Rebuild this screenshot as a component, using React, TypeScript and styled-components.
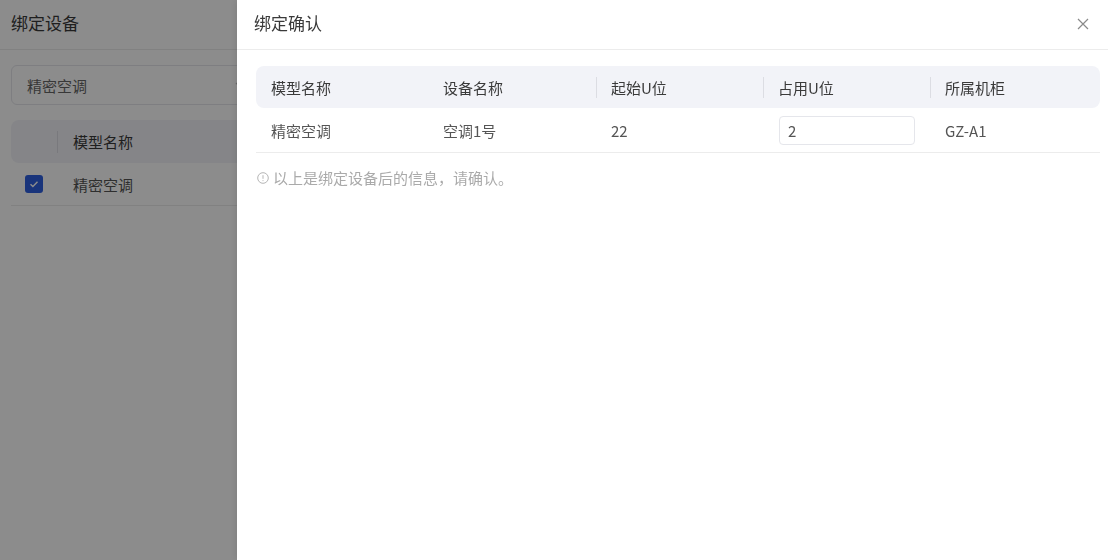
import styled, { createGlobalStyle } from 'styled-components';

const GlobalStyle = createGlobalStyle`
  html, body {
    margin: 0;
    padding: 0;
  }
  body {
    font-family: "Noto Sans CJK SC", "Noto Sans", sans-serif;
    background: #fff;
    color: #333;
    overflow: hidden;
  }
  * {
    box-sizing: border-box;
  }
`;

/* ---------- page behind the drawer ---------- */

const Page = styled.div`
  width: 100vw;
  height: 100vh;
  background: #fff;
`;

const PageHeader = styled.div`
  height: 50px;
  display: flex;
  align-items: center;
  padding: 0 11px 4px;
  border-bottom: 1px solid #ececec;
  font-size: 17px;
  color: #3a3a3a;
`;

const PageBody = styled.div`
  padding: 15px 11px 0;
`;

const Select = styled.div`
  width: 250px;
  height: 40px;
  display: flex;
  align-items: center;
  justify-content: space-between;
  padding: 0 14px 0 15px;
  border: 1px solid #e5e6eb;
  border-radius: 6px;
  font-size: 15px;
  color: #666;
`;

const ListTable = styled.div`
  margin-top: 15px;
  width: 620px;
`;

const ListRow = styled.div<{ $head?: boolean }>`
  display: grid;
  grid-template-columns: 47px 1fr;
  align-items: center;
  height: 43px;
  font-size: 15px;
  color: ${(p) => (p.$head ? '#3a3a3a' : '#555')};
  background: ${(p) => (p.$head ? '#f2f3f8' : 'transparent')};
  border-radius: ${(p) => (p.$head ? '8px' : '0')};
  border-bottom: ${(p) => (p.$head ? 'none' : '1px solid #ececec')};
`;

const CheckCell = styled.div<{ $divider?: boolean }>`
  height: 22px;
  display: flex;
  align-items: center;
  justify-content: center;
  border-right: ${(p) => (p.$divider ? '1px solid #dcdde3' : '1px solid transparent')};
`;

const Checkbox = styled.span`
  width: 18px;
  height: 18px;
  border-radius: 3px;
  background: #2f5fe0;
  display: inline-flex;
  align-items: center;
  justify-content: center;
`;

const ListCell = styled.div`
  padding-left: 15px;
`;

/* ---------- drawer ---------- */

const Mask = styled.div`
  position: fixed;
  inset: 0;
  background: rgba(0, 0, 0, 0.45);
`;

const Drawer = styled.aside`
  position: fixed;
  top: 0;
  right: 0;
  bottom: 0;
  width: 871px;
  background: #fff;
  display: flex;
  flex-direction: column;
  box-shadow: -2px 0 6px rgba(0, 0, 0, 0.08);
`;

const DrawerHeader = styled.div`
  height: 50px;
  flex-shrink: 0;
  display: flex;
  align-items: center;
  justify-content: space-between;
  padding: 0 19px 0 16px;
  border-bottom: 1px solid #ececec;
`;

const DrawerTitle = styled.h2`
  margin: -5px 0 0 1px;
  font-size: 17px;
  font-weight: 400;
  color: #3a3a3a;
`;

const CloseButton = styled.button`
  width: 12px;
  height: 12px;
  padding: 0;
  border: none;
  background: none;
  display: flex;
  cursor: pointer;
  margin-top: -2px;
`;

const DrawerBody = styled.div`
  padding: 16px 8px 0 19px;
`;

const COLUMNS = '172px 168px 167px 167px 1fr';

const TableHead = styled.div`
  display: grid;
  grid-template-columns: ${COLUMNS};
  align-items: center;
  height: 42px;
  background: #f2f3f8;
  border-radius: 8px;
  font-size: 15px;
  color: #3a3a3a;
`;

const TableRow = styled.div`
  display: grid;
  grid-template-columns: ${COLUMNS};
  align-items: center;
  height: 45px;
  border-bottom: 1px solid #ececec;
  font-size: 15px;
  color: #555;
`;

const HeadCell = styled.div<{ $divider?: boolean }>`
  position: relative;
  padding-left: 15px;

  &::before {
    content: '';
    display: ${(p) => (p.$divider ? 'block' : 'none')};
    position: absolute;
    left: 0;
    top: 50%;
    width: 1px;
    height: 21px;
    margin-top: -10px;
    background: #dcdde3;
  }
`;

const Cell = styled.div`
  padding-left: 15px;
`;

const NumberInput = styled.input`
  width: 136px;
  height: 29px;
  margin-left: 1px;
  padding: 0 8px;
  border: 1px solid #e5e6eb;
  border-radius: 4px;
  font: inherit;
  font-size: 15px;
  color: #555;
  outline: none;
`;

const Note = styled.p`
  margin: 14px 0 0 1px;
  display: flex;
  align-items: center;
  gap: 4px;
  font-size: 15px;
  color: #aaa;
`;

const headers = ['模型名称', '设备名称', '起始U位', '占用U位', '所属机柜'];

export default function App() {
  return (
    <>
      <GlobalStyle />
      <Page>
        <PageHeader>绑定设备</PageHeader>
        <PageBody>
          <Select>
            <span>精密空调</span>
            <svg width="12" height="12" viewBox="0 0 12 12" fill="none">
              <path d="M2 4l4 4 4-4" stroke="#bbb" strokeWidth="1.2" />
            </svg>
          </Select>
          <ListTable>
            <ListRow $head>
              <CheckCell $divider />
              <ListCell>模型名称</ListCell>
            </ListRow>
            <ListRow>
              <CheckCell>
                <Checkbox>
                  <svg width="10" height="10" viewBox="0 0 10 10" fill="none">
                    <path d="M1.5 5.2l2.4 2.3L8.5 2.8" stroke="#fff" strokeWidth="1.4" />
                  </svg>
                </Checkbox>
              </CheckCell>
              <ListCell>精密空调</ListCell>
            </ListRow>
          </ListTable>
        </PageBody>
      </Page>

      <Mask />

      <Drawer>
        <DrawerHeader>
          <DrawerTitle>绑定确认</DrawerTitle>
          <CloseButton aria-label="关闭">
            <svg width="12" height="12" viewBox="0 0 12 12" fill="none">
              <path d="M1 1l10 10M11 1L1 11" stroke="#8a8a8a" strokeWidth="1.2" />
            </svg>
          </CloseButton>
        </DrawerHeader>
        <DrawerBody>
          <TableHead>
            {headers.map((h, i) => (
              <HeadCell key={h} $divider={i >= 2}>
                {h}
              </HeadCell>
            ))}
          </TableHead>
          <TableRow>
            <Cell>精密空调</Cell>
            <Cell>空调1号</Cell>
            <Cell>22</Cell>
            <Cell>
              <NumberInput defaultValue="2" />
            </Cell>
            <Cell>GZ-A1</Cell>
          </TableRow>
          <Note>
            <svg width="12" height="12" viewBox="0 0 12 12" fill="none">
              <circle cx="6" cy="6" r="5.3" stroke="#b5b5b5" strokeWidth="1" />
              <path d="M6 3.2v3.6M6 8.2v.9" stroke="#b5b5b5" strokeWidth="1" />
            </svg>
            以上是绑定设备后的信息，请确认。
          </Note>
        </DrawerBody>
      </Drawer>
    </>
  );
}
